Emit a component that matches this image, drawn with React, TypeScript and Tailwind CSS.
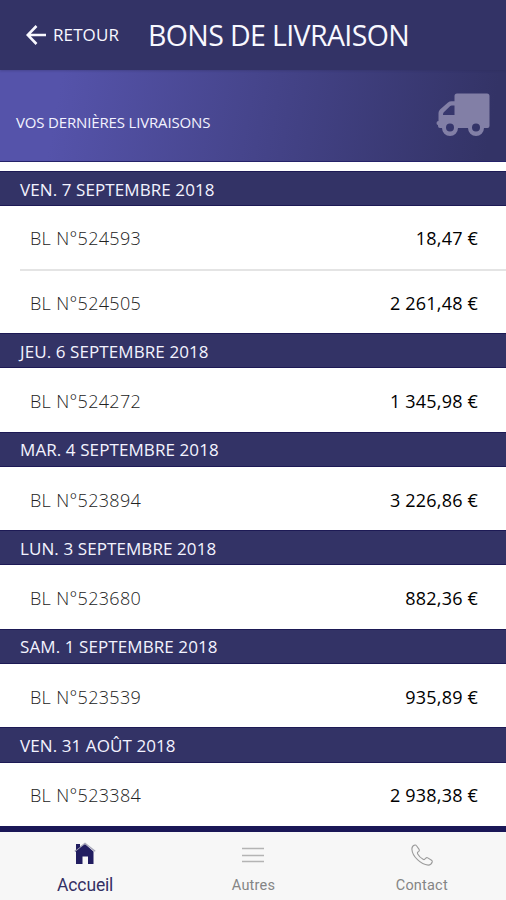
type Delivery = { id: string; price: string };
type Day = { date: string; items: Delivery[] };

const days: Day[] = [
  {
    date: "VEN. 7 SEPTEMBRE 2018",
    items: [
      { id: "524593", price: "18,47 €" },
      { id: "524505", price: "2 261,48 €" },
    ],
  },
  { date: "JEU. 6 SEPTEMBRE 2018", items: [{ id: "524272", price: "1 345,98 €" }] },
  { date: "MAR. 4 SEPTEMBRE 2018", items: [{ id: "523894", price: "3 226,86 €" }] },
  { date: "LUN. 3 SEPTEMBRE 2018", items: [{ id: "523680", price: "882,36 €" }] },
  { date: "SAM. 1 SEPTEMBRE 2018", items: [{ id: "523539", price: "935,89 €" }] },
  { date: "VEN. 31 AOÛT 2018", items: [{ id: "523384", price: "2 938,38 €" }] },
];

function BackArrow() {
  return (
    <svg width="20" height="20" viewBox="0 0 20 20" fill="none" stroke="#f8f8ff" strokeWidth="2.6">
      <path d="M20 10H2M10.500 1 1.700 10l8.800 9" />
    </svg>
  );
}

function Truck() {
  return (
    <svg className="-mt-[2px]" width="54" height="44" viewBox="0 0 54 44" fill="#827fa6">
      <path
        fillRule="evenodd"
        d="M21 .5h30a2.500 2.500 0 0 1 2.500 2.500V33q0 2-2 2H48A8 8 0 0 1 32 35H22A8 8 0 0 1 6 35H4q-2 0-2-2v-1q-1.500 0-1.500-2t2-2V20q0-2 1.500-3.500L12 9.500q1.500-1.200 3.500-1.200h3V3Q18.500.5 21 .5ZM7 22h11.500v-9.500h-2.800q-.8 0-1.500.6l-6.600 6.500Q7 20.200 7 22ZM14 30.500a4 4 0 1 0 0 8 4 4 0 0 0 0-8ZM40 30.500a4 4 0 1 0 0 8 4 4 0 0 0 0-8Z"
      />
    </svg>
  );
}

function House() {
  return (
    <svg width="22" height="23" viewBox="0 0 22 23">
      <path d="M2 2h4v3l5-3 8.500 7.500V22H14v-7.500H8.500V22H2V10L1 9l1-1Z" fill="#211d60" />
      <path d="m.8 9.300 10.200-8 10.200 8" fill="none" stroke="#a6a6b8" strokeWidth="1.300" />
      <path d="M2 2h4v3L2 8Z" fill="#211d60" />
    </svg>
  );
}

function Lines() {
  return (
    <svg width="22" height="16" viewBox="0 0 22 16" stroke="#b4b4b4" strokeWidth="1.400">
      <path d="M0 1.500h22M0 8.500h22M0 14.500h22" />
    </svg>
  );
}

function Phone() {
  return (
    <svg width="22" height="22" viewBox="0 0 22 22" fill="none" stroke="#9b9b9b" strokeWidth="1.100" strokeLinejoin="round">
      <path d="M3.900 1C2.200 1.400.8 3.100.9 5.200c.2 3.500 2.700 7.700 5.600 10.500 3.100 3.100 7 5.200 10.700 5.400 2.100 0 3.500-1.500 4-3.100.2-.8-.1-1.300-.7-1.700l-3.700-2.400c-.8-.5-1.400-.3-2 .3l-1 1c-.5.5-1 .5-1.700.1-2.100-1.200-4.100-3.100-5.400-5.400-.4-.7-.4-1.200.1-1.700l1-.9c.5-.5.700-1.200.3-1.900L5.500 1.700C5.100 1.100 4.700.8 3.900 1Z" />
    </svg>
  );
}

export default function App() {
  return (
    <div className="flex h-[900px] w-[506px] flex-col overflow-hidden bg-white font-['Open_Sans','Noto_Sans',sans-serif]">
      <header className="z-10 flex h-[70px] shrink-0 items-center bg-[#333366] pl-[26px] text-[#f8f8ff] shadow-[0_1px_2px_#29295750]">
        <BackArrow />
        <span className="-mt-[2px] ml-[7px] w-[95px] whitespace-nowrap text-[17px] leading-none tracking-[0.1px]">RETOUR</span>
        <h1 className="mt-px whitespace-nowrap text-[28.500px] leading-none tracking-[-0.620px]">BONS DE LIVRAISON</h1>
      </header>

      <section className="flex h-[92px] shrink-0 items-center justify-between border-b border-[#252269] bg-linear-[100deg,#5553aa_0%,#5553aa_12%,#333366_96%] pl-4 pr-4">
        <h2 className="mt-[13px] whitespace-nowrap text-[15px] leading-none tracking-[-0.160px] text-[#f3f3ff]">VOS DERNIÈRES LIVRAISONS</h2>
        <Truck />
      </section>

      <main className="mt-[9px] h-[661px] shrink-0 overflow-hidden">
        {days.map((day) => (
          <section key={day.date}>
            <h3 className="flex h-[35.200px] items-center border-y border-[#1d1a55] bg-[#333366] pl-5 pt-px text-[17px] leading-none tracking-[0.090px] text-[#f3f3ff]">
              <span className="whitespace-nowrap">{day.date}</span>
            </h3>
            <ul className="pl-5">
              {day.items.map((item) => (
                <li key={item.id} className="flex h-[62.400px] items-center justify-between pl-[10px] pr-[28px] pt-[2px] text-[18px] leading-none first:h-[64.400px] only:h-[63.450px] not-last:border-b-2 not-last:border-[#e4e4e4]">
                  <span className="whitespace-nowrap font-light tracking-[0.330px] text-[#222]">BL N°{item.id}</span>
                  <span className="whitespace-nowrap font-medium tracking-[0.200px] text-black">{item.price}</span>
                </li>
              ))}
            </ul>
          </section>
        ))}
        <div className="h-2 bg-[#1a1757]" />
      </main>

      <nav className="grid h-[68px] shrink-0 grid-cols-3 bg-[#f7f7f7] pl-px font-[Roboto,sans-serif] text-[#858585]">
        <a className="flex flex-col items-center pt-[10px] text-[#343064]">
          <House />
          <span className="mt-[12px] text-[17.500px] leading-none tracking-[-0.150px]">Accueil</span>
        </a>
        <a className="flex flex-col items-center pt-[15px]">
          <Lines />
          <span className="mt-[16px] text-[14.500px] leading-none tracking-[0.200px]">Autres</span>
        </a>
        <a className="flex flex-col items-center pt-[12px]">
          <Phone />
          <span className="mt-[13px] text-[14.500px] leading-none tracking-[0.200px]">Contact</span>
        </a>
      </nav>
    </div>
  );
}
